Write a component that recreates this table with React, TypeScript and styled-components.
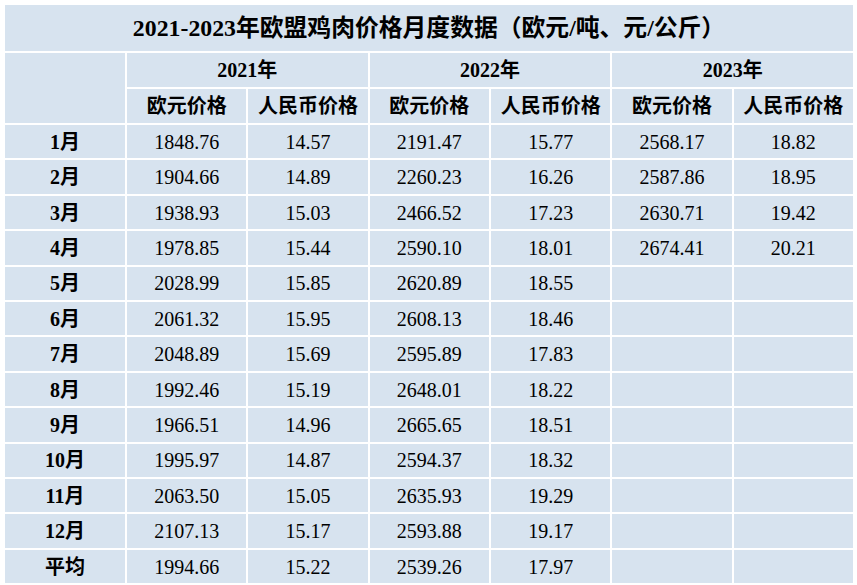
import React from "react";
import styled, { createGlobalStyle } from "styled-components";

const GlobalStyle = createGlobalStyle`
  html, body {
    margin: 0;
    padding: 0;
    background: #ffffff;
  }
  body {
    font-family: "Liberation Serif", "Noto Sans CJK SC", serif;
    color: #000;
  }
`;

const Page = styled.div`
  padding: 5px 4px 0 5px;
  width: 857px;
  box-sizing: border-box;
`;

const Table = styled.div`
  display: grid;
  grid-template-columns: 120px repeat(6, 1fr);
  grid-template-rows: 46px 34px 34px;
  grid-auto-rows: 33.42px;
  gap: 2px;
  background: #ffffff;
`;

const Cell = styled.div<{ $span?: number; $rows?: number; $bold?: boolean; $size?: number }>`
  background: #d7e3ef;
  display: flex;
  align-items: center;
  justify-content: center;
  grid-column: span ${(p) => p.$span ?? 1};
  grid-row: span ${(p) => p.$rows ?? 1};
  font-size: ${(p) => p.$size ?? 20}px;
  font-weight: ${(p) => (p.$bold ? 700 : 400)};
  white-space: nowrap;
  line-height: 1;
`;

const Title = styled(Cell)`
  font-size: 23.8px;
  font-weight: 700;
  padding-top: 1px;
`;

type Row = { label: string; values: (string | null)[] };

const rows: Row[] = [
  { label: "1月", values: ["1848.76", "14.57", "2191.47", "15.77", "2568.17", "18.82"] },
  { label: "2月", values: ["1904.66", "14.89", "2260.23", "16.26", "2587.86", "18.95"] },
  { label: "3月", values: ["1938.93", "15.03", "2466.52", "17.23", "2630.71", "19.42"] },
  { label: "4月", values: ["1978.85", "15.44", "2590.10", "18.01", "2674.41", "20.21"] },
  { label: "5月", values: ["2028.99", "15.85", "2620.89", "18.55", null, null] },
  { label: "6月", values: ["2061.32", "15.95", "2608.13", "18.46", null, null] },
  { label: "7月", values: ["2048.89", "15.69", "2595.89", "17.83", null, null] },
  { label: "8月", values: ["1992.46", "15.19", "2648.01", "18.22", null, null] },
  { label: "9月", values: ["1966.51", "14.96", "2665.65", "18.51", null, null] },
  { label: "10月", values: ["1995.97", "14.87", "2594.37", "18.32", null, null] },
  { label: "11月", values: ["2063.50", "15.05", "2635.93", "19.29", null, null] },
  { label: "12月", values: ["2107.13", "15.17", "2593.88", "19.17", null, null] },
  { label: "平均", values: ["1994.66", "15.22", "2539.26", "17.97", null, null] },
];

const years = ["2021年", "2022年", "2023年"];

export default function App() {
  return (
    <>
      <GlobalStyle />
      <Page>
        <Table>
          <Title $span={7}>2021-2023年欧盟鸡肉价格月度数据（欧元/吨、元/公斤）</Title>
          <Cell $rows={2} />
          {years.map((y) => (
            <Cell key={y} $span={2} $bold>
              {y}
            </Cell>
          ))}
          {years.map((y) => (
            <React.Fragment key={y + "-sub"}>
              <Cell $bold>欧元价格</Cell>
              <Cell $bold>人民币价格</Cell>
            </React.Fragment>
          ))}
          {rows.map((r) => (
            <React.Fragment key={r.label}>
              <Cell $bold>{r.label}</Cell>
              {r.values.map((v, i) => (
                <Cell key={i}>{v ?? ""}</Cell>
              ))}
            </React.Fragment>
          ))}
        </Table>
      </Page>
    </>
  );
}
